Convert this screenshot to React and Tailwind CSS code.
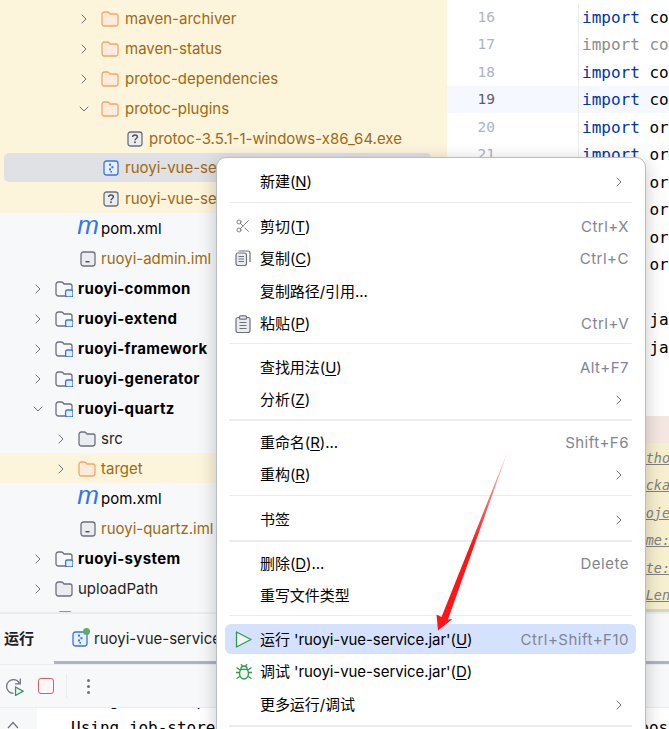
import React from 'react';
import { ChevronRight, ChevronDown, Scissors } from 'lucide-react';

const Folder = ({ tone = 'gray', module }) => {
  const stroke = tone === 'orange' ? '#f4a768' : '#6c707e';
  const fill = tone === 'orange' ? '#ffebdc' : '#ebecf0';
  return (
    <svg width="18" height="16" viewBox="0 0 18 16" className="shrink-0">
      <path d="M1 3.5C1 2.1 2 1 3.4 1H6.2C6.9 1 7.5 1.3 8 1.8L9 3H15C16.1 3 17 3.9 17 5V12.5C17 13.9 16 15 14.6 15H3.4C2 15 1 13.9 1 12.5Z" fill={module ? '#f7f8fa' : fill} stroke={stroke} strokeWidth="1.3" />
      {module && <rect x="10.6" y="9" width="7.4" height="7" rx="1.8" fill="#e7effd" stroke="#3574f0" strokeWidth="1.3" />}
    </svg>
  );
};

const Question = () => (
  <svg width="16" height="16" viewBox="0 0 16 16" className="shrink-0">
    <rect x="1" y="1" width="14" height="14" rx="2.5" fill="#ebecf0" stroke="#6c707e" strokeWidth="1.3" />
    <path d="M5.6 6C5.7 4.7 6.7 4 8 4C9.4 4 10.4 4.9 10.4 6C10.4 7.5 8 7.5 8 9.3" fill="none" stroke="#494b57" strokeWidth="1.4" />
    <rect x="7.2" y="10.4" width="1.6" height="1.7" fill="#494b57" />
  </svg>
);

const Jar = ({ size = 16 }) => (
  <svg width={size} height={size} viewBox="0 0 16 16" className="shrink-0">
    <rect x="1" y="1" width="14" height="14" rx="2.5" fill="#e7effd" stroke="#3574f0" strokeWidth="1.3" />
    <rect x="6" y="3.6" width="2" height="2" fill="#3574f0" />
    <rect x="8.4" y="6.2" width="2" height="2" fill="#3574f0" />
    <rect x="6" y="8.4" width="2" height="2" fill="#3574f0" />
    <rect x="7.4" y="11" width="1.6" height="1.6" fill="#3574f0" />
  </svg>
);

const Iml = () => (
  <svg width="16" height="16" viewBox="0 0 16 16" className="shrink-0">
    <rect x="1" y="1" width="14" height="14" rx="2.5" fill="#ebecf0" stroke="#6c707e" strokeWidth="1.3" />
    <rect x="5.5" y="10" width="4" height="1.4" fill="#494b57" />
  </svg>
);

const Maven = () => (
  <span className="w-[18px] shrink-0 flex justify-center text-[#3574f0] text-[26px] leading-[16px] italic font-['Liberation_Sans'] translate-x-px -translate-y-[4px]">m</span>
);

const tree = [
  { level: 2, arrow: 'right', icon: 'orange', label: 'maven-archiver', color: 'text-[#9f6a12]', yellow: true },
  { level: 2, arrow: 'right', icon: 'orange', label: 'maven-status', color: 'text-[#9f6a12]', yellow: true },
  { level: 2, arrow: 'right', icon: 'orange', label: 'protoc-dependencies', color: 'text-[#9f6a12]', yellow: true },
  { level: 2, arrow: 'down', icon: 'orange', label: 'protoc-plugins', color: 'text-[#9f6a12]', yellow: true },
  { level: 3, icon: 'question', label: 'protoc-3.5.1-1-windows-x86_64.exe', color: 'text-[#9f6a12]', yellow: true },
  { level: 2, icon: 'jar', label: 'ruoyi-vue-service.jar', color: 'text-[#9f6a12]', yellow: true, selected: true },
  { level: 2, icon: 'question', label: 'ruoyi-vue-service.jar.original', color: 'text-[#9f6a12]', yellow: true },
  { level: 1, icon: 'maven', label: 'pom.xml', color: 'text-black' },
  { level: 1, icon: 'iml', label: 'ruoyi-admin.iml', color: 'text-[#9f6a12]' },
  { level: 0, arrow: 'right', icon: 'module', label: 'ruoyi-common', color: 'text-black font-bold tracking-[0.35px]' },
  { level: 0, arrow: 'right', icon: 'module', label: 'ruoyi-extend', color: 'text-black font-bold tracking-[0.35px]' },
  { level: 0, arrow: 'right', icon: 'module', label: 'ruoyi-framework', color: 'text-black font-bold tracking-[0.35px]' },
  { level: 0, arrow: 'right', icon: 'module', label: 'ruoyi-generator', color: 'text-black font-bold tracking-[0.35px]' },
  { level: 0, arrow: 'down', icon: 'module', label: 'ruoyi-quartz', color: 'text-black font-bold tracking-[0.35px]' },
  { level: 1, arrow: 'right', icon: 'folder', label: 'src', color: 'text-[#1e1f22]' },
  { level: 1, arrow: 'right', icon: 'orange', label: 'target', color: 'text-[#9f6a12]', yellow: true },
  { level: 1, icon: 'maven', label: 'pom.xml', color: 'text-black' },
  { level: 1, icon: 'iml', label: 'ruoyi-quartz.iml', color: 'text-[#9f6a12]' },
  { level: 0, arrow: 'right', icon: 'module', label: 'ruoyi-system', color: 'text-black font-bold tracking-[0.35px]' },
  { level: 0, arrow: 'right', icon: 'folder', label: 'uploadPath', color: 'text-[#1e1f22]' },
  { level: 0, icon: 'question', label: 'README.md', color: 'text-[#1e1f22]' },
];

const levelPad = ['pl-[30px]', 'pl-[53px]', 'pl-[76px]', 'pl-[127px]'];
const iconGap = ['ml-[9px]', 'ml-[9px]', 'ml-[9px]', 'ml-0'];
const textGap = ['ml-[5px]', 'ml-[5px]', 'ml-[6px]', 'ml-[6px]'];

const TreeIcon = ({ type }) => {
  if (type === 'orange') return <Folder tone="orange" />;
  if (type === 'folder') return <Folder />;
  if (type === 'module') return <Folder module />;
  if (type === 'question') return <Question />;
  if (type === 'jar') return <Jar />;
  if (type === 'iml') return <Iml />;
  return <Maven />;
};

const TreeRow = ({ row }) => (
  <div className={`h-[30px] shrink-0 ${row.yellow ? 'bg-[#fdf4dc]' : ''}`}>
    <div className={`flex items-center whitespace-nowrap ${row.selected ? 'h-[29px] pt-px bg-[#dfe1e5] rounded-[5px] ml-[4px] mr-[16px] pl-[72px]' : `h-full pt-[2px] ${levelPad[row.level]}`}`}>
      {row.level < 3 && (
        <span className="w-4 shrink-0 text-[#6c707e]">
          {row.arrow === 'right' && <ChevronRight size={16} strokeWidth={1.5} />}
          {row.arrow === 'down' && <ChevronDown size={16} strokeWidth={1.5} />}
        </span>
      )}
      <span className={`flex justify-end ${iconGap[row.level]} ${row.level === 3 ? 'w-4' : 'w-[18px]'}`}>
        <TreeIcon type={row.icon} />
      </span>
      <span className={`${textGap[row.level]} ${row.color}`}>{row.label}</span>
    </div>
  </div>
);

const code = [
  ['16', 'import', 'com.ruoyi.common.utils.file.FileUtils;'],
  ['17', 'import', 'com.ruoyi.common.utils.poi.ExcelUtil;', true],
  ['18', 'import', 'com.ruoyi.quartz.domain.SysJob;'],
  ['19', 'import', 'com.ruoyi.quartz.service.ISysJobService;'],
  ['20', 'import', 'org.quartz.JobDataMap;'],
  ['21', 'import', 'org.quartz.JobExecutionContext;'],
  ['22', 'import', 'org.quartz.Scheduler;'],
  ['23', 'import', 'org.quartz.SchedulerException;'],
  ['24', 'import', 'org.quartz.Trigger;'],
  ['25', 'import', 'org.quartz.TriggerKey;'],
  ['26', '', ''],
  ['27', 'import', 'java.util.List;'],
  ['28', 'import', 'java.util.Map;'],
  ['29', '', ''],
  ['30', '', ''],
  ['31', '', ''],
];

const hints = ['  @author', '  @package', '  @project', '  @name:', '  @date:', '     Length'];

const MenuItem = ({ label, mark, after = '', icon, shortcut, arrow, active }) => (
  <div className="h-[32.5px] ml-[8px] mr-[9px] flex items-center">
    <div className={`h-[30px] w-full pl-[35px] pr-[7px] pt-px flex items-center justify-between rounded-[6px] whitespace-nowrap ${active ? 'bg-[#d4e2ff]' : ''}`}>
      <span className="relative text-black tracking-[-0.07px]">
        {icon && <span className="absolute left-[-25px] top-[2px]">{icon}</span>}
        {label}
        {mark && <>(<span className="underline underline-offset-2">{mark}</span>)</>}
        {after}
      </span>
      {shortcut && <span className="text-[#818594] tracking-[0.5px]">{shortcut}</span>}
      {arrow && <ChevronRight size={16} strokeWidth={1.5} className="text-[#6c707e] mr-[2px]" />}
    </div>
  </div>
);

const CopyIcon = () => (
  <svg width="16" height="16" viewBox="0 0 16 16" fill="none" stroke="#6c707e" strokeWidth="1.2">
    <rect x="1" y="3" width="10.5" height="12.5" rx="2" fill="#ebecf0" />
    <path d="M3.5 1H13C14.2 1 15 1.8 15 3V12" />
    <path d="M3.5 6.5H9M3.5 9H9M3.5 11.5H9" />
  </svg>
);

const PasteIcon = () => (
  <svg width="16" height="18" viewBox="0 0 16 18" fill="none" stroke="#6c707e" strokeWidth="1.2">
    <rect x="1" y="2.5" width="14" height="15" rx="2" fill="#ebecf0" />
    <rect x="4.5" y="0.8" width="7" height="3.4" rx="1" fill="#ebecf0" />
    <path d="M4.5 7.5H11.5M4.5 10.5H11.5M4.5 13.5H11.5" />
  </svg>
);

const PlayIcon = () => (
  <svg width="17" height="17" viewBox="0 0 17 17">
    <path d="M1.5 1L16 8.5L1.5 16Z" fill="#eaf6ee" stroke="#369650" strokeWidth="1.3" strokeLinejoin="round" />
  </svg>
);

const BugIcon = () => (
  <svg width="18" height="18" viewBox="0 0 18 18" fill="none" stroke="#369650" strokeWidth="1.3">
    <ellipse cx="9" cy="10.5" rx="4.5" ry="5.5" fill="#eaf6ee" />
    <path d="M5.8 6.3C5.8 4.2 7 3 9 3C11 3 12.2 4.2 12.2 6.3Z" fill="#eaf6ee" />
    <path d="M6 1L7.3 3M12 1L10.7 3M1 9.5H4.5M17 9.5H13.5M1.5 15.5L5 13.5M16.5 15.5L13 13.5M1.5 4.5L5 7M16.5 4.5L13 7" />
  </svg>
);

const Sep = ({ h, pt, line }) => (
  <div className={`ml-[12px] mr-[13px] ${h} ${pt}`}>
    <div className={`${line} bg-[#ebecf0]`} />
  </div>
);

export default function App() {
  return (
    <div className="relative w-[669px] h-[729px] overflow-hidden bg-white flex flex-col text-[15px] font-['Inter','Noto_Sans_CJK_SC',sans-serif]">
      <div className="h-[612px] shrink-0 flex overflow-hidden">
        <div className="w-[447px] shrink-0 bg-[#f7f8fa] overflow-hidden">
          <div className="h-[3px] bg-[#fdf4dc]" />
          {tree.map((row, i) => <TreeRow key={i} row={row} />)}
        </div>

        <div className="flex-1 min-w-0 pt-[3px] overflow-hidden font-['DejaVu_Sans_Mono',monospace] whitespace-pre">
          {code.map(([num, kw, rest, dim]) => (
            <div key={num} className={`h-[27.5px] flex items-center ${num === '19' ? 'bg-[#f5f8fe]' : ''} ${num === '31' ? 'bg-[#f5e6e1]' : ''}`}>
              <span className={`w-[48px] shrink-0 text-right text-[14.5px] translate-y-px ${num === '19' ? 'text-[#5a5d6b]' : 'text-[#aeb3c2]'}`}>{num}</span>
              <span className="h-full w-[84px] shrink-0 border-r border-[#ebecf0]" />
              <span className={`ml-[3px] shrink-0 text-[16px] translate-y-px ${dim ? 'text-[#8c8c8c]' : 'text-[#0033b3]'}`}>{kw}</span>
              <span className={`shrink-0 text-[16px] translate-y-px ${dim ? 'text-[#8c8c8c]' : 'text-black'}`}>{kw && ' '}{rest}</span>
            </div>
          ))}
          <div className="h-[169px] bg-[#f7f0cf] border-b-[3px] border-[#d8d5c5] pt-[1px] pl-[158px] italic text-[13.5px] text-[#808080]">
            {hints.map((h) => (
              <div key={h} className="h-[27.5px] flex items-center underline">{h}</div>
            ))}
          </div>
        </div>
      </div>

      <div className="flex-1 flex flex-col min-h-0">
        <div className="h-[52px] shrink-0 bg-[#f7f8fa] border-t-[2px] border-[#ebecf0] flex items-center relative">
          <span className="ml-[4px] font-semibold text-[#1e1f22]">运行</span>
          <span className="ml-[38px] relative"><Jar size={16} />
            <span className="absolute -top-[3px] -right-[2px] w-[7px] h-[7px] rounded-full bg-[#5fad65]" />
          </span>
          <span className="ml-[6px] text-[#1e1f22] whitespace-nowrap">ruoyi-vue-service.jar</span>
          <div className="absolute left-[54px] right-0 bottom-0 h-[3px] bg-[#aeb3c1]" />
        </div>
        <div className="h-[44px] shrink-0 bg-[#f7f8fa] border-y border-[#ebecf0] flex items-center pl-[5px]">
          <svg width="19" height="19" viewBox="0 0 18 18" fill="none" className="mr-[14px]">
            <path d="M8 15.5C4.4 15.5 1.5 12.6 1.5 9C1.5 5.4 4.4 2.5 8 2.5C10.5 2.5 12.6 3.9 13.7 6" stroke="#6c707e" strokeWidth="1.2" />
            <path d="M14.5 1.5V6.5H9.5" stroke="#6c707e" strokeWidth="1.2" />
            <path d="M10 9.5L17 13.5L10 17.5Z" fill="#eaf6ee" stroke="#369650" strokeWidth="1.2" />
          </svg>
          <span className="w-4 h-4 rounded-[3px] bg-[#fff7f7] border-[1.5px] border-[#e55765]" />
          <span className="w-px h-[24px] bg-[#ebecf0] ml-[12px]" />
          <span className="ml-[20px] flex flex-col gap-[3px]">
            <span className="w-[3px] h-[3px] rounded-full bg-[#6c707e]" />
            <span className="w-[3px] h-[3px] rounded-full bg-[#6c707e]" />
            <span className="w-[3px] h-[3px] rounded-full bg-[#6c707e]" />
          </span>
        </div>
        <div className="flex-1 flex min-h-0 overflow-hidden">
          <div className="w-[37px] shrink-0 bg-[#f7f8fa] flex justify-center pr-[11px] pt-[13px]">
            <svg width="12" height="8" viewBox="0 0 12 8" fill="none" stroke="#6c707e" strokeWidth="1.2"><path d="M1 7L6 1.5L11 7" /></svg>
          </div>
          <div className="flex-1 min-w-0 pl-[34px] -mt-[21px] font-['DejaVu_Sans_Mono',monospace] text-[16px] leading-[27px] whitespace-pre text-black">
            <div>Using thread pool 'org.quartz.simpl.SimpleThreadPool'</div>
            <div>Using job-store 'org.quartz.simpl.RAMJobStore' - which has pos</div>
          </div>
        </div>
      </div>

      <div className="absolute left-[216px] top-[157px] w-[430px] h-[590px] bg-white rounded-[10px] border border-[#b9bdc9] shadow-[0_4px_18px_rgba(0,0,0,0.22)] pt-[7px]">
        <MenuItem label="新建" mark="N" arrow />
        <Sep h="h-[12.5px]" pt="pt-[4px]" line="h-px" />
        <MenuItem label="剪切" mark="T" shortcut="Ctrl+X" icon={<Scissors size={16} strokeWidth={1.3} className="text-[#6c707e]" />} />
        <MenuItem label="复制" mark="C" shortcut="Ctrl+C" icon={<CopyIcon />} />
        <MenuItem label="复制路径/引用..." />
        <MenuItem label="粘贴" mark="P" shortcut="Ctrl+V" icon={<PasteIcon />} />
        <Sep h="h-[11px]" pt="pt-[3px]" line="h-px" />
        <MenuItem label="查找用法" mark="U" shortcut="Alt+F7" />
        <MenuItem label="分析" mark="Z" arrow />
        <Sep h="h-[10px]" pt="pt-[3px]" line="h-[2px]" />
        <MenuItem label="重命名" mark="R" after="..." shortcut="Shift+F6" />
        <MenuItem label="重构" mark="R" arrow />
        <Sep h="h-[12px]" pt="pt-[4px]" line="h-px" />
        <MenuItem label="书签" arrow />
        <Sep h="h-[11.5px]" pt="pt-[4px]" line="h-[2px]" />
        <MenuItem label="删除" mark="D" after="..." shortcut="Delete" />
        <MenuItem label="重写文件类型" />
        <Sep h="h-[11px]" pt="pt-[3px]" line="h-px" />
        <MenuItem label="运行 'ruoyi-vue-service.jar'" mark="U" shortcut="Ctrl+Shift+F10" icon={<PlayIcon />} active />
        <MenuItem label="调试 'ruoyi-vue-service.jar'" mark="D" icon={<BugIcon />} />
        <MenuItem label="更多运行/调试" arrow />
        <Sep h="h-[11px]" pt="pt-[4px]" line="h-[2px]" />
      </div>

      {/* red arrow drawn on top of the screenshot */}
      <svg className="absolute left-0 top-0 pointer-events-none" width="669" height="729" viewBox="0 0 669 729">
        <defs>
          <linearGradient id="tail" x1="507" y1="452" x2="470" y2="545" gradientUnits="userSpaceOnUse">
            <stop offset="0" stopColor="#ffc0c0" />
            <stop offset="1" stopColor="#fe1515" />
          </linearGradient>
        </defs>
        <path d="M507.5 452L448 619.5L452.5 619L438 630.5L436.5 614.5L441.5 617Z" fill="url(#tail)" />
      </svg>
    </div>
  );
}
